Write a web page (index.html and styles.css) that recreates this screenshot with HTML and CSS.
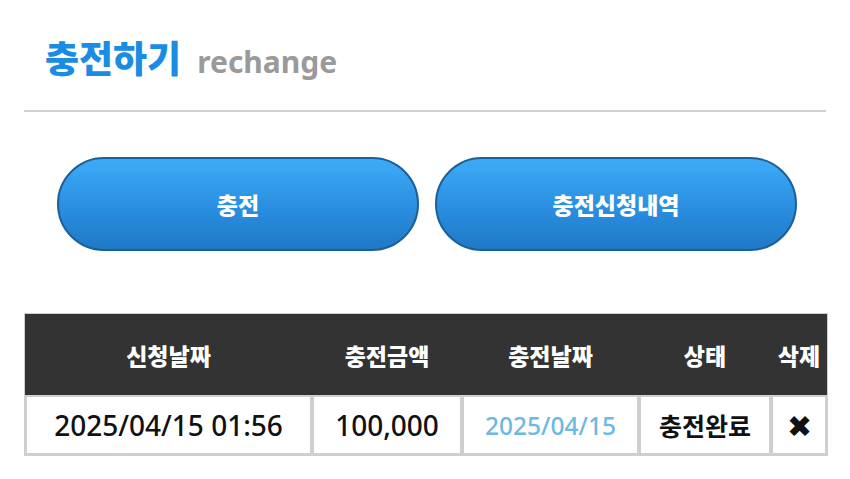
FILE: index.html
```html
<!DOCTYPE html>
<html lang="ko">
  <head>
    <meta charset="UTF-8" />
    <meta name="viewport" content="width=device-width, initial-scale=1.0" />
    <title>충전하기</title>
    <link rel="stylesheet" href="styles.css">
  </head>
  <body>
    <div class="wrap">
      <div class="page-title">
        <h2>충전하기</h2>
        <span class="sub">rechange</span>
      </div>

      <div class="tab-btns">
        <a href="#" class="btn">충전</a>
        <a href="#" class="btn">충전신청내역</a>
      </div>

      <table class="charge-list">
        <colgroup>
          <col class="c-req" />
          <col class="c-amount" />
          <col class="c-date" />
          <col class="c-state" />
          <col class="c-del" />
        </colgroup>
        <thead>
          <tr>
            <th>신청날짜</th>
            <th>충전금액</th>
            <th>충전날짜</th>
            <th>상태</th>
            <th>삭제</th>
          </tr>
        </thead>
        <tbody>
          <tr>
            <td>2025/04/15 01:56</td>
            <td>100,000</td>
            <td class="done-date">2025/04/15</td>
            <td class="state">충전완료</td>
            <td class="del">&#10006;</td>
          </tr>
        </tbody>
      </table>
    </div>
  </body>
</html>
```

FILE: styles.css
```css
body {
  margin: 0;
  padding: 0;
  background-color: #fff;
  font-family: "Noto Sans", "Noto Sans CJK KR", sans-serif;
  color: #111;
}
.wrap {
  padding: 0 24px;
}
.page-title {
  display: flex;
  align-items: baseline;
  padding: 32px 0 0 21px;
  height: 78px;
  border-bottom: 2px solid #d0d0d0;
}
.page-title h2 {
  margin: 0;
  font-family: "Noto Sans CJK KR", sans-serif;
  font-size: 37px;
  font-weight: 900;
  line-height: 50px;
  color: #1a8ce4;
}
.page-title .sub {
  margin-left: 16px;
  font-family: "Noto Sans", sans-serif;
  font-size: 30px;
  font-weight: 700;
  color: #9a9a9a;
}
.tab-btns {
  display: flex;
  gap: 16px;
  padding: 45px 0 0 33px;
}
.btn {
  display: flex;
  justify-content: center;
  align-items: center;
  width: 358px;
  height: 90px;
  border: 2px solid #1c5f98;
  border-radius: 47px;
  background: linear-gradient(to bottom, #3eabf6, #2a8ee0 55%, #1f79c6);
  color: #fff;
  text-decoration: none;
  font-family: "Noto Sans CJK KR", sans-serif;
  font-size: 23px;
  font-weight: 900;
}
.charge-list {
  width: 802px;
  margin-top: 62px;
  table-layout: fixed;
  border-collapse: separate;
  border-spacing: 0;
  border: 1px solid #cfcfcf;
}
.c-req { width: 287px; }
.c-amount { width: 150px; }
.c-date { width: 177px; }
.c-state { width: 132px; }
.c-del { width: 56px; }
.charge-list th {
  height: 81px;
  padding: 0;
  background-color: #333;
  color: #fff;
  font-family: "Noto Sans CJK KR", sans-serif;
  font-size: 23px;
  font-weight: 900;
  white-space: nowrap;
}
.charge-list td {
  height: 56px;
  padding: 0;
  border: 2px solid #cfcfcf;
  text-align: center;
  font-size: 28px;
  font-weight: 500;
  white-space: nowrap;
}
.charge-list .done-date {
  color: #6cb9e2;
  font-size: 24.5px;
}
.charge-list .state {
  font-family: "Noto Sans CJK KR", sans-serif;
  font-size: 25px;
  font-weight: 700;
}
.charge-list .del {
  font-size: 30px;
}
```
